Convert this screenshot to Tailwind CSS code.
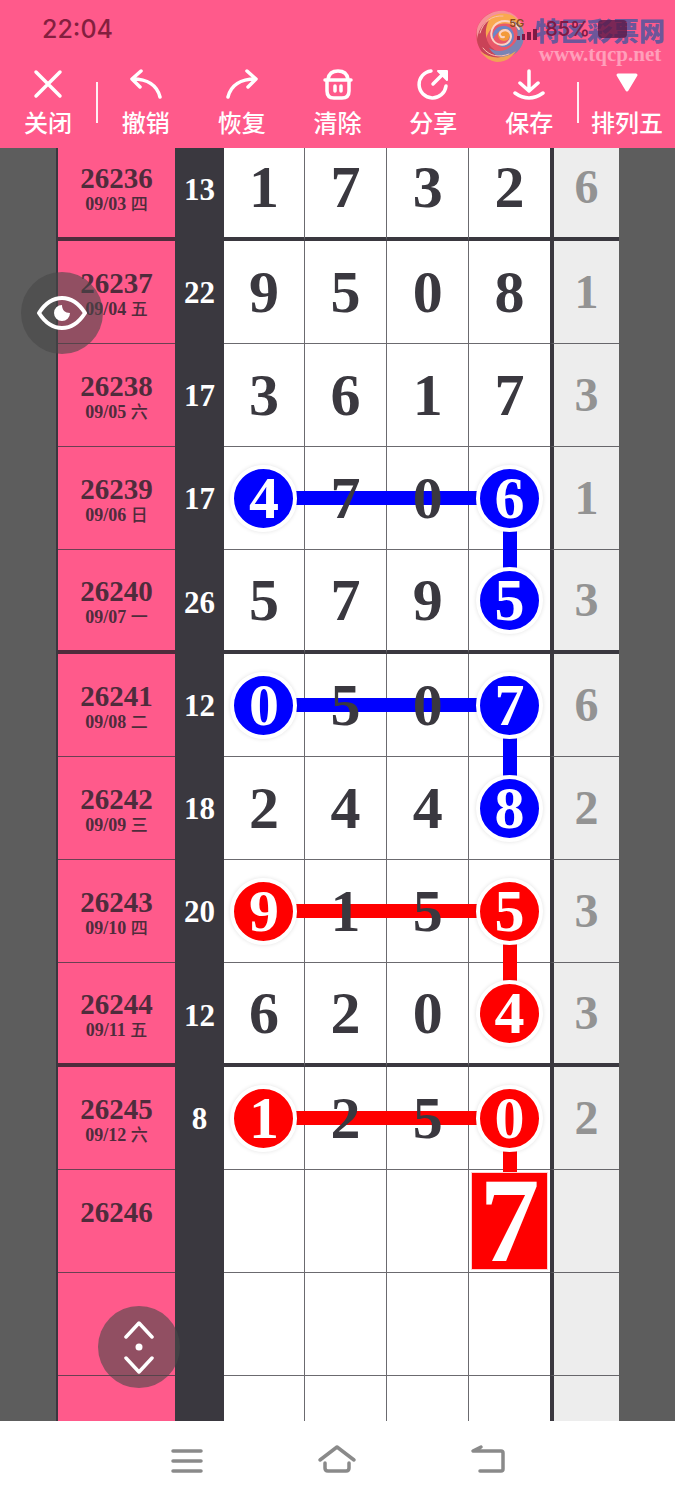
<!DOCTYPE html>
<html lang="zh-CN">
  <head>
    <meta charset="UTF-8" />
    <meta name="viewport" content="width=device-width, initial-scale=1.0" />
    <script src="https://cdn.jsdelivr.net/npm/@tailwindcss/browser@4"></script>
    <title>排列五</title>
  </head>
  <body
    class="flex h-screen flex-col bg-white font-['Inter','Noto_Sans_CJK_SC',sans-serif]"
  >
    <header class="relative shrink-0 bg-[#ff5a8b] text-white">
      <!-- Status bar -->
      <div class="relative z-10 flex h-[68px] justify-between px-[42px] pt-[14px]">
        <span class="text-[25px] leading-[30px] font-medium text-[#841f3f]"
          >22:04</span
        >
        <div class="flex h-[30px] items-center gap-2 pr-[6px] text-[#7d1a45]">
          <div class="flex flex-col">
            <span class="text-[11px] leading-[11px] font-semibold text-[#8a4a20]">5G</span>
            <svg class="ml-2 h-[11px] w-[20px]" viewBox="0 0 20 11" fill="currentColor">
              <rect x="0" y="7" width="3" height="4" />
              <rect x="5" y="5" width="3" height="6" />
              <rect x="10" y="3" width="4" height="8" />
              <rect x="16" y="0" width="4" height="11" />
            </svg>
          </div>
          <span class="text-[20px] leading-[32px] font-medium">85%</span>
          <span class="h-[18px] w-[29px] rounded bg-[#5a1a48]/80"></span>
        </div>
      </div>

      <!-- Site watermark -->
      <div class="absolute top-[8px] right-[10px] flex items-start gap-2.5">
        <svg class="h-[54px] w-[50px]" viewBox="0 0 50 54" fill="none" stroke-linecap="round">
          <circle cx="25" cy="27" r="24" fill="#e8596a" />
          <path d="M4 16C10 6 20 2 30 3c9 2 15 8 18 16-8-8-18-11-28-7C12 15 6 22 4 33 1 28 1 21 4 16z" fill="#f6919a" />
          <path d="M12 12C20 4 34 3 42 11c4 4 7 10 7 17-5-10-14-14-23-12-8 1-13 7-15 15-4-7-3-14 1-19z" fill="#f9a94f" />
          <path d="M2 32c1-9 5-16 12-20-5 10-4 20 2 27 6 6 14 8 22 6-6 6-14 8-21 6C9 48 3 41 2 32z" fill="#c94257" />
          <path d="M49 27c0 13-9 22-20 22-7 0-12-4-15-9 7 4 14 4 20 0 7-4 10-11 8-18-1-4-3-7-6-9 8 1 13 7 13 14z" fill="#7a84b4" />
          <path d="M18 32c-2-8 4-15 12-14 7 1 11 8 8 15-3 6-10 8-15 4 6 1 10-2 11-6 1-5-2-8-6-8-5 0-8 4-10 9z" fill="#6b86c6" />
          <circle cx="29" cy="27" r="6" fill="#f39a3a" />
          <path d="M5 43c10 8 24 9 36 0-5 8-12 11-19 11-7-1-13-5-17-11z" fill="#f0a355" />
          <path d="M29 29c-4 1-6-4-2-6 6-3 11 3 8 9-4 7-15 6-18-2-3-9 4-17 13-17 6 0 11 3 14 8" stroke="#fbd3c4" stroke-width="2" />
          <path d="M5 25C8 14 17 7 28 8M8 40c6 8 16 10 26 6" stroke="#fbbcae" stroke-width="1" />
        </svg>
        <div class="flex flex-col items-center pt-[8px]">
          <span
            class="font-['Noto_Sans_CJK_SC',sans-serif] text-[26px] leading-[28px] font-black text-[#45569f]/80"
            >特区彩票网</span
          >
          <span
            class="font-['Liberation_Serif',serif] text-[21px] leading-[20px] font-bold text-[#ffb0c6]/80"
            >www.tqcp.net</span
          >
        </div>
      </div>

      <!-- Toolbar -->
      <nav
        class="flex items-start pb-3 font-['Noto_Sans_CJK_SC',sans-serif] text-[24px] leading-[28px] font-medium"
      >
        <button type="button" class="flex flex-1 flex-col items-center gap-2">
          <svg class="size-8" viewBox="0 0 32 32" fill="none" stroke="currentColor" stroke-width="3.5" stroke-linecap="round">
            <path d="M4 4l24 24M28 4L4 28" />
          </svg>
          关闭
        </button>
        <div class="mt-[14px] h-[41px] w-[2px] bg-white/90"></div>
        <button type="button" class="flex flex-1 flex-col items-center gap-2">
          <svg class="size-8" viewBox="0 0 32 32" fill="none" stroke="currentColor" stroke-width="3.5" stroke-linecap="round" stroke-linejoin="round">
            <path d="M11 3L2 11l8 8M3 11c14 0 24 6 27 18" />
          </svg>
          撤销
        </button>
        <button type="button" class="flex flex-1 flex-col items-center gap-2">
          <svg class="size-8" viewBox="0 0 32 32" fill="none" stroke="currentColor" stroke-width="3.5" stroke-linecap="round" stroke-linejoin="round">
            <path d="M21 3l9 8-8 8M29 11C15 11 5 17 2 29" />
          </svg>
          恢复
        </button>
        <button type="button" class="flex flex-1 flex-col items-center gap-2">
          <svg class="size-8" viewBox="0 0 32 32" fill="none" stroke="currentColor" stroke-width="3.5" stroke-linecap="round" stroke-linejoin="round">
            <path d="M3 12h26M6 11c1-6 5-8 10-8s9 2 10 8M5 12v11q0 7 7 7h8q7 0 7-7V12" />
            <path d="M13 18v5M19 18v5" />
          </svg>
          清除
        </button>
        <button type="button" class="flex flex-1 flex-col items-center gap-2">
          <svg class="size-8" viewBox="0 0 32 32" fill="none" stroke="currentColor" stroke-width="3.5" stroke-linecap="round" stroke-linejoin="round">
            <path d="M14 3A13.500 13.500 0 1 0 29 18M16 16L28 4" />
            <path d="M21 3h9v9z" fill="currentColor" stroke-width="2" />
          </svg>
          分享
        </button>
        <button type="button" class="flex flex-1 flex-col items-center gap-2">
          <svg class="size-8" viewBox="0 0 32 32" fill="none" stroke="currentColor" stroke-width="3.5" stroke-linecap="round" stroke-linejoin="round">
            <path d="M16 3v20M7 15l9 8 9-8M2 25q14 10 28 0" />
          </svg>
          保存
        </button>
        <div class="mt-[14px] h-[41px] w-[2px] bg-white/90"></div>
        <button
          type="button"
          class="flex flex-1 flex-col items-center gap-2 whitespace-nowrap"
        >
          <svg class="size-8" viewBox="0 0 32 32" fill="currentColor" stroke="currentColor" stroke-width="3" stroke-linejoin="round">
            <path d="M7 7h18l-9 15z" />
          </svg>
          排列五
        </button>
      </nav>
    </header>

    <main class="relative min-h-0 flex-1 overflow-hidden bg-[#5d5d5d] px-14">
      <table
        class="-mt-[11px] w-full table-fixed border-separate border-spacing-0 border-l-2 border-[#3a383f] bg-white text-center font-['Liberation_Serif','Noto_Sans_CJK_SC',serif] leading-none font-bold text-[#3a383f]"
      >
        <colgroup>
          <col class="w-[117px]" />
          <col class="w-[49px]" />
          <col class="w-[14.4%]" />
          <col class="w-[14.7%]" />
          <col class="w-[14.6%]" />
          <col />
          <col class="w-[69px]" />
        </colgroup>
        <tbody id="rows"></tbody>
      </table>

      <!-- Floating buttons -->
      <button
        type="button"
        aria-label="显示"
        class="absolute top-[124px] left-[21px] z-30 grid size-[82px] place-items-center rounded-full bg-[#484848]/60 text-white"
      >
        <svg class="h-[36px] w-[50px]" viewBox="0 0 50 36" fill="none">
          <path d="M2 18C9 7 16 3 25 3s16 4 23 15C41 29 34 33 25 33S9 29 2 18z" stroke="currentColor" stroke-width="4" stroke-linejoin="round" />
          <path d="M25 10c0 5 3 8 8 8a8 8 0 1 1-8-8z" fill="currentColor" />
        </svg>
      </button>
      <button
        type="button"
        aria-label="滚动"
        class="absolute bottom-[33px] left-[98px] z-30 grid size-[82px] place-items-center rounded-full bg-[#484848]/60 text-white"
      >
        <svg class="h-[54px] w-[32px]" viewBox="0 0 32 54" fill="none" stroke="currentColor" stroke-width="3.5" stroke-linecap="round" stroke-linejoin="round">
          <path d="M3 17L16 3l13 14M3 38l13 14 13-14" />
          <circle cx="16" cy="27" r="3.5" fill="currentColor" stroke="none" />
        </svg>
      </button>
    </main>

    <!-- System navigation -->
    <nav class="flex h-[79px] shrink-0 items-center px-28 text-[#8a8a8a]">
      <button type="button" aria-label="任务" class="grid flex-1 place-items-center">
        <svg class="size-10" viewBox="0 0 40 40" fill="none" stroke="currentColor" stroke-width="3.5" stroke-linecap="round">
          <path d="M6 10h28M6 20h28M6 30h28" />
        </svg>
      </button>
      <button type="button" aria-label="主页" class="grid flex-1 place-items-center">
        <svg class="size-10" viewBox="0 0 40 40" fill="none" stroke="currentColor" stroke-width="3.5" stroke-linecap="round" stroke-linejoin="round">
          <path d="M3 19L20 6l17 13M8 22v5q0 3 3 3h18q3 0 3-3v-5" />
        </svg>
      </button>
      <button type="button" aria-label="返回" class="grid flex-1 place-items-center">
        <svg class="size-10" viewBox="0 0 40 40" fill="none" stroke="currentColor" stroke-width="3.5" stroke-linecap="round" stroke-linejoin="round">
          <path d="M13 6L5 10h28q2 0 2 2v16q0 2-2 2H12" />
        </svg>
      </button>
    </nav>

    <script>
      // color: fill of the circles, link: bars across the row and down to the next one
      const rows = [
        { issue: "26236", date: "09/03 四", sum: 13, nums: "1732", last: 6, thick: true },
        { issue: "26237", date: "09/04 五", sum: 22, nums: "9508", last: 1 },
        { issue: "26238", date: "09/05 六", sum: 17, nums: "3617", last: 3 },
        { issue: "26239", date: "09/06 日", sum: 17, nums: "4706", last: 1, color: "blue", link: true },
        { issue: "26240", date: "09/07 一", sum: 26, nums: "5795", last: 3, color: "blue", thick: true },
        { issue: "26241", date: "09/08 二", sum: 12, nums: "0507", last: 6, color: "blue", link: true },
        { issue: "26242", date: "09/09 三", sum: 18, nums: "2448", last: 2, color: "blue" },
        { issue: "26243", date: "09/10 四", sum: 20, nums: "9155", last: 3, color: "red", link: true },
        { issue: "26244", date: "09/11 五", sum: 12, nums: "6204", last: 3, color: "red", thick: true },
        { issue: "26245", date: "09/12 六", sum: 8, nums: "1250", last: 2, color: "red", link: true },
        { issue: "26246", date: "", sum: "", nums: "   7", last: "", color: "red", pick: true },
        { issue: "", date: "", sum: "", nums: "    ", last: "" },
        { issue: "", date: "", sum: "", nums: "    ", last: "" },
      ];
      const fills = { blue: "bg-[#0000ff]", red: "bg-[#ff0000]" };

      function numberCell(row, i, line) {
        const fill = fills[row.color];
        const side = i < 3 ? "border-r border-r-[#3a383f]/75" : "";
        let html = "";
        if (row.link) {
          const span = ["left-1/2 -right-px", "left-0 -right-px", "left-0 -right-px", "left-0 right-1/2"][i];
          html += `<span class="absolute top-1/2 -mt-[7px] h-[14px] ${span} ${fill}"></span>`;
          if (i === 3) {
            html += `<span class="absolute top-1/2 left-1/2 -ml-[7px] h-[104px] w-[14px] ${fill}"></span>`;
          }
        }
        if (row.pick && i === 3) {
          html += `<span class="absolute inset-x-[2px] inset-y-[2px] z-10 border border-[#ffd0d0] text-[120px] leading-[96px] text-white ${fill}">${row.nums[i]}</span>`;
        } else if (row.color && (i === 3 || (row.link && i === 0))) {
          html += `<span class="relative z-10 mx-auto block size-[67px] rounded-full border-4 border-white text-center leading-[58px] text-white shadow-[0_0_4px_rgba(0,0,0,0.12)] ${fill}">${row.nums[i]}</span>`;
        } else {
          html += `<span class="relative z-10">${row.nums[i]}</span>`;
        }
        return `<td class="relative p-0 text-[60px] ${side} ${line}">${html}</td>`;
      }

      document.getElementById("rows").innerHTML = rows
        .map((row) => {
          const line = row.thick
            ? "border-b-4 border-b-[#3a383f]"
            : "border-b border-b-[#3a383f]/75";
          const pinkLine = row.thick
            ? "border-b-4 border-b-[#4f2c3c]"
            : "border-b border-b-[#3a383f]/75";
          return `
            <tr class="${row.thick ? "h-[104px]" : "h-[103px]"}">
              <td class="bg-[#ff5a8b] p-0 pt-[6px] text-[#4f2c3c] ${pinkLine}">
                <div class="h-[28px] text-[29px] leading-[28px]">${row.issue}</div>
                <div class="h-[24px] text-[18px] leading-[24px]">${row.date.slice(0, 5)} <span class="font-['Noto_Sans_CJK_SC',sans-serif] text-[17px] leading-none font-medium">${row.date.slice(6)}</span></div>
              </td>
              <td class="bg-[#3a383f] p-0 text-[31px] text-white">${row.sum}</td>
              ${[0, 1, 2, 3].map((i) => numberCell(row, i, line)).join("")}
              <td class="border-l-4 border-l-[#3a383f] bg-[#ededed] p-0 text-[48px] text-[#939393] ${line}">${row.last}</td>
            </tr>`;
        })
        .join("");
    </script>
  </body>
</html>
